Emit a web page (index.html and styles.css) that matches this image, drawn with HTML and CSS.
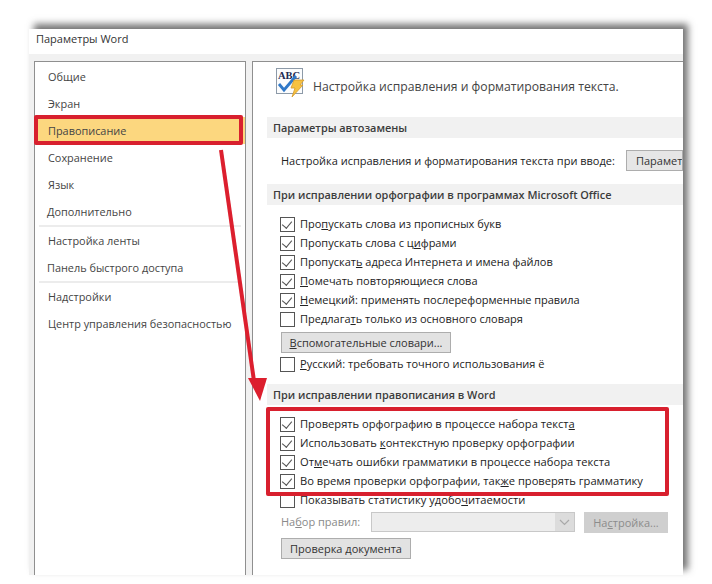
FILE: index.html
```html
<!DOCTYPE html>
<html lang="ru">
<head>
<meta charset="utf-8">
<title>Параметры Word</title>
<link rel="stylesheet" href="styles.css">
</head>
<body>
<div class="window">
  <div class="titlebar">Параметры Word</div>
  <div class="panes">
    <nav class="nav">
      <div class="nav-item">Общие</div>
      <div class="nav-item">Экран</div>
      <div class="nav-item active">Правописание</div>
      <div class="nav-item">Сохранение</div>
      <div class="nav-item">Язык</div>
      <div class="nav-item tight">Дополнительно</div>
      <div class="nav-sep"></div>
      <div class="nav-item">Настройка ленты</div>
      <div class="nav-item tight">Панель быстрого доступа</div>
      <div class="nav-sep"></div>
      <div class="nav-item">Надстройки</div>
      <div class="nav-item">Центр управления безопасностью</div>
    </nav>
    <main class="content">
      <div class="heading">
        <svg class="abc" width="31" height="31" viewBox="0 0 31 31">
          <rect x="2.500" y="1.500" width="26" height="25" fill="#fbfcfd" stroke="#8d9aa8"/>
          <text x="4" y="11.500" class="abc-text">ABC</text>
          <path d="M5 17l5 6L22 9" fill="none" stroke="#2f78c8" stroke-width="2.800"/>
          <path d="M20 13h10l-4 5h3L18 30l3-9h-4z" fill="#f6c242" stroke="#d69a2a" stroke-width=".8"/>
        </svg>
        <span class="heading-text">Настройка исправления и форматирования текста.</span>
      </div>
      <h2 class="band first">Параметры автозамены</h2>
      <div class="autocorrect">
        <span>Настройка исправления и форматирования текста при вводе:</span>
        <button class="btn cut">Парамет</button>
      </div>
      <h2 class="band">При исправлении орфографии в программах Microsoft Office</h2>
      <div class="checks office">
        <label class="check on">Про<u>п</u>ускать слова из прописных букв</label>
        <label class="check on">Пропускать слова с ц<u>и</u>фрами</label>
        <label class="check on">Пропускат<u>ь</u> адреса Интернета и имена файлов</label>
        <label class="check on"><u>П</u>омечать повторяющиеся слова</label>
        <label class="check on"><u>Н</u>емецкий: применять послереформенные правила</label>
        <label class="check">Предлага<u>т</u>ь только из основного словаря</label>
      </div>
      <button class="btn dict"><u>В</u>спомогательные словари...</button>
      <label class="check russian"><u>Р</u>усский: требовать точного использования ё</label>
      <h2 class="band word">При исправлении правописания в Word</h2>
      <div class="checks wordlist">
        <label class="check on">Проверять орфографию в процессе набора текст<u>а</u></label>
        <label class="check on">Использовать <u>к</u>онтекстную проверку орфографии</label>
        <label class="check on">От<u>м</u>ечать ошибки грамматики в процессе набора текста</label>
        <label class="check on">Во время проверки орфографии, так<u>ж</u>е проверять грамматику</label>
        <label class="check">Показывать статистику удобо<u>ч</u>итаемости</label>
      </div>
      <div class="rules">
        <span class="rules-label">На<u>б</u>ор правил:</span>
        <div class="select"><span class="select-arrow"><svg width="11" height="7" viewBox="0 0 11 7"><path d="M1 1l4.500 4.500L10 1" fill="none" stroke="#a9a9a9" stroke-width="1.200"/></svg></span></div>
        <button class="btn disabled">На<u>с</u>тройка...</button>
      </div>
      <button class="btn doc">Проверка <u>д</u>окумента</button>
    </main>
  </div>
</div>
<div class="mark mark-nav"></div>
<div class="mark mark-word"></div>
<svg class="arrow" width="60" height="270" viewBox="0 0 60 270">
  <path d="M2 1L35 232" stroke="#dc1f2e" stroke-width="4" fill="none"/>
  <path d="M29 229L48 229L41 252z" fill="#dc1f2e"/>
</svg>
</body>
</html>
```
FILE: styles.css
```css
* { box-sizing: border-box; }
html, body { margin: 0; height: 100%; background: #fff; overflow: hidden; }
body { font-family: "Open Sans", "Noto Sans", sans-serif; font-size: 11px; color: #222; position: relative; }

.window {
  width: 654px;
  height: 546px;
  margin: 29px 0 0 29px;
  background: #f1f1f1;
  display: flex;
  flex-direction: column;
  box-shadow: 5px -5px 7px rgba(70,70,70,.75);
}
.titlebar { height: 25px; background: #fff; padding: 1px 0 0 7px; font-size: 11px; line-height: 17px; color: #333; flex: none; }
.panes { flex: 1; display: flex; gap: 6px; padding: 7px 0 0 5px; min-height: 0; }

.nav { width: 212px; background: #fff; border: 1px solid #8f8f8f; border-bottom: 0; padding: 1px 0 0; flex: none; }
.nav-item { height: 27px; line-height: 27px; padding-left: 13px; color: #444; font-size: 10.900px; }
.nav-item.tight { padding-left: 12px; }
.nav-item.active { background: #fcd77f; color: #444; }
.nav-sep { height: 2px; margin: 0 4px; background: #ececec; }

.content { flex: 1; min-width: 0; background: #fff; border-left: 1px solid #8f8f8f; border-top: 1px solid #8f8f8f; padding: 0 0 0 14px; overflow: hidden; }
.heading { display: flex; align-items: flex-start; height: 55px; padding: 5px 0 0 7px; }
.abc { flex: none; }
.abc-text { font-family: "Liberation Serif", serif; font-weight: 700; font-size: 10.500px; fill: #1c2a52; }
.heading-text { font-size: 12.200px; line-height: 17px; margin: 11px 0 0 8px; color: #444; white-space: nowrap; }

.band { margin: 0; height: 21px; background: #f1f1f1; font-size: 10.900px; font-weight: 600; line-height: 21px; padding-left: 6px; color: #3c3c3c; white-space: nowrap; }
.autocorrect { height: 46px; display: flex; align-items: center; justify-content: space-between; padding: 0 0 1px 14px; white-space: nowrap; }

.checks { display: flex; flex-direction: column; }
.office { padding-top: 9px; }
.wordlist { padding-top: 9px; }
.wordlist .check { font-size: 11.170px; }
.check { display: block; height: 19px; line-height: 19px; padding-left: 33px; position: relative; white-space: nowrap; color: #222; }
.check::before { content: ""; position: absolute; left: 13px; top: 3px; width: 13px; height: 13px; background: #fff; border: 1px solid #555; }
.check.on::after { content: ""; position: absolute; left: 17px; top: 5px; width: 5px; height: 8px; border: solid #555; border-width: 0 1.200px 1.200px 0; transform: rotate(40deg); }

.btn { font: inherit; color: #333; background: #e2e2e2; border: 1px solid #adadad; padding: 0; height: 21px; line-height: 18px; display: block; white-space: nowrap; }
.cut { width: 57px; text-align: left; padding-left: 9px; overflow: hidden; flex: none; background: #e6e6e6; }
.dict { width: 170px; margin: 4px 0 0 14px; }
.russian { margin-top: 1px; }
.word { margin-top: 11px; }

.rules { display: flex; align-items: flex-start; height: 29px; padding: 3px 0 0 14px; }
.rules-label { color: #8a8a8a; width: 90px; line-height: 19px; }
.select { width: 204px; height: 20px; background: #ededed; border: 1px solid #c8c8c8; position: relative; }
.select-arrow { position: absolute; right: 0; top: 0; width: 19px; height: 18px; background: #dcdcdc; display: flex; align-items: center; justify-content: center; }
.btn.disabled { width: 84px; margin-left: 9px; color: #8c8c8c; background: #cfcfcf; border-color: #cfcfcf; }
.doc { width: 130px; margin: 0 0 0 14px; }

.mark { position: absolute; border: 4px solid #d8202e; border-radius: 2px; }
.mark-nav { left: 34px; top: 115px; width: 209px; height: 30px; }
.mark-word { left: 266px; top: 407px; width: 403px; height: 89px; }
.arrow { position: absolute; left: 219px; top: 149px; }
```
